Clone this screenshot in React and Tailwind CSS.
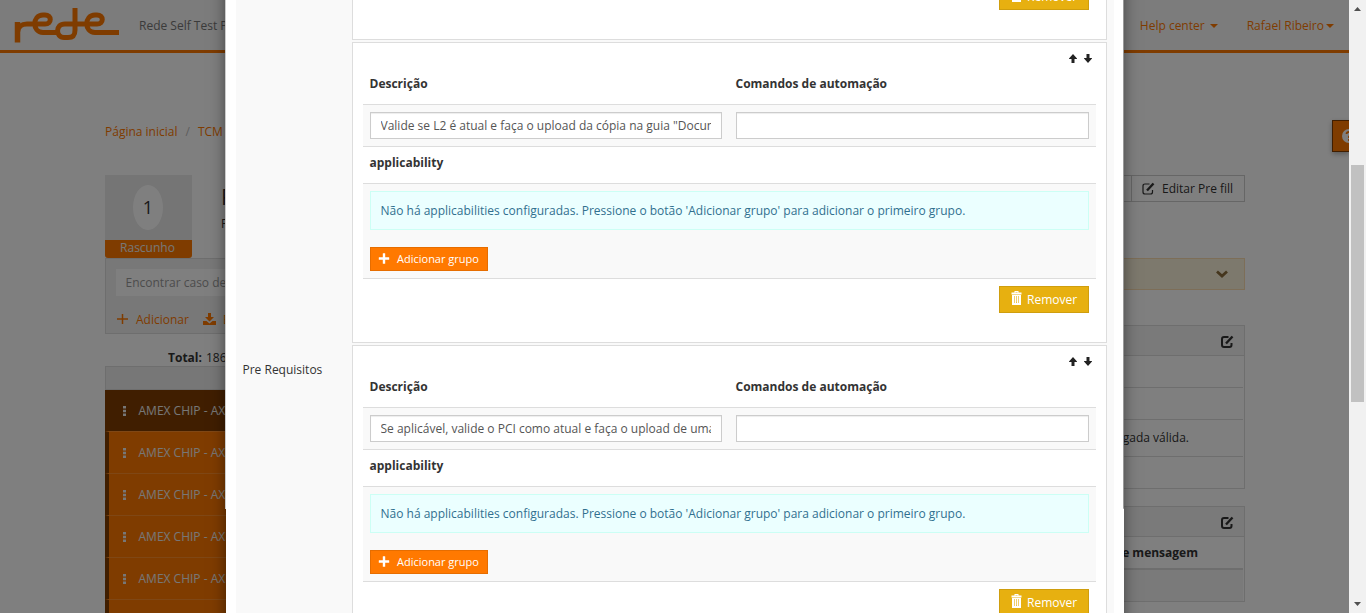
import React from "react";

const PLUS = "M11 13H6.4Q6 13 6 12.6V8H1.4Q1 8 1 7.6V5.4Q1 5 1.4 5H6V.4Q6 0 6.4 0h2.2Q9 0 9 .4V5h4.6q.4 0 .4.4v2.2q0 .4-.4.4H9v4.600q0 .4-.4.4z";

function Caret() {
  return (
    <svg width="8" height="4" viewBox="0 0 8 4" fill="currentColor"><path d="M0 0h8L4 4z" /></svg>
  );
}

function Logo() {
  return (
    <svg width="106" height="36" viewBox="0 0 106 36" fill="none" stroke="#ff7900" strokeWidth="5">
      <path d="M3.500 34.500V14" strokeWidth="5.500" />
      <path d="M3.500 24C4.500 18 7.500 16 13 16H31C38 16 38 7 31 7H29C18 7 18 24.500 29 24.500H43" />
      <path d="M61 0V22C61 27.500 59 29.500 54 29.500H50C41.500 29.500 41 16 51 16H83C90 16 90 7 83 7H81C70 7 70 24.500 81 24.500H105" />
    </svg>
  );
}

function EditIcon({ bold }) {
  return (
    <svg width="13" height="13" viewBox="0 0 13 13" fill="none" stroke="currentColor" strokeWidth={bold ? 2 : 1.2}>
      <path d="M7.500 2H3Q1 2 1 4v6q0 2 2 2h5.500q2 0 2-2V8" />
      <path d="M5 8.500 11.500 1.500" strokeWidth="2.400" />
    </svg>
  );
}

function Trash() {
  return (
    <svg width="11" height="14" viewBox="0 0 11 14" fill="#fff">
      <path fillRule="evenodd" d="M3.500 0h4v1.500H10.500v2H.5v-2h3zM4.500 1v.5h2V1zM1 4h9v10H1zM3 5v7h.6V5zm2.200 0v7h.6V5zM7.400 5v7H8V5z" />
    </svg>
  );
}

function RemoveButton() {
  return (
    <button className="flex h-[27px] w-[90px] shrink-0 items-start border border-[#cf9e0e] bg-[#e7b010] pl-[11px] pt-1 text-white">
      <Trash />
      <span className="ml-[5px] whitespace-nowrap text-[12px] leading-[18px]">Remover</span>
    </button>
  );
}

function Arrows() {
  return (
    <div className="flex justify-end gap-[7px] pr-[4px] pt-[11px] text-[#222]">
      <svg width="8" height="9" viewBox="0 0 8 9" fill="currentColor"><path d="M4 0 8 4.500V5H5.500V9h-3V5H0v-.5z" /></svg>
      <svg width="8" height="9" viewBox="0 0 8 9" fill="currentColor"><path d="M4 9 0 4.500V4h2.500V0h3v4H8v.5z" /></svg>
    </div>
  );
}

function Requirement({ value }) {
  return (
    <section className="mb-[2px] h-[301px] shrink-0 border border-[#ddd] bg-white pl-[10px] pr-[10px]">
      <div className="h-[31px]"><Arrows /></div>
      <div className="grid h-[30px] grid-cols-2 text-[12px] font-bold leading-[20px] text-[#333]">
        <div className="pl-[6.500px]">Descrição</div>
        <div className="pl-[6px]">Comandos de automação</div>
      </div>
      <div className="flex h-[43px] gap-[14px] border-y border-[#ddd] bg-[#f9f9f9] px-[7px] pt-[7px]">
        <div className="h-[27px] w-[352px] shrink-0 border border-[#ccc] bg-white pl-[9.500px] pr-[10px] shadow-[inset_0_1px_1px_rgba(0,0,0,0.075)]">
          <div className="overflow-hidden whitespace-nowrap text-[12px] leading-[25px] text-[#555]">{value}</div>
        </div>
        <div className="h-[27px] w-[353px] shrink-0 border border-[#ccc] bg-white shadow-[inset_0_1px_1px_rgba(0,0,0,0.075)]" />
      </div>
      <div className="h-[36px] pl-[6.500px] pt-[6px] text-[12px] font-bold leading-[20px] text-[#333]">applicability</div>
      <div className="h-[96px] border-y border-[#ddd] bg-[#f9f9f9] px-[7px] pt-[7px]">
        <div className="h-[39px] border border-[#ccfff5] bg-[#ebffff] pl-[9.500px] text-[12px] leading-[38px] text-[#31708f]">
          Não há applicabilities configuradas. Pressione o botão 'Adicionar grupo' para adicionar o primeiro grupo.
        </div>
        <button className="mt-[17px] flex h-[24px] w-[118px] items-center border border-[#e66d00] bg-[#ff7900] pl-[7px] text-[11px] text-white">
          <svg className="mb-[2px]" width="12" height="11" viewBox="0 0 15 13" fill="currentColor"><path d={PLUS} /></svg>
          <span className="ml-[7px] whitespace-nowrap">Adicionar grupo</span>
        </button>
      </div>
      <div className="flex justify-end pr-[7px] pt-[7px]"><RemoveButton /></div>
    </section>
  );
}

function Header() {
  return (
    <header className="flex h-[53px] shrink-0 items-start border-b-[3px] border-[#ff7900] bg-[#f8f8f8] pl-[14px] text-[12px]">
      <div className="mt-[8px] w-[125px]"><Logo /></div>
      <span className="mt-[16px] whitespace-nowrap leading-[20px] text-[#777]">Rede Self Test Portal</span>
      <div className="ml-auto mr-[15px] mt-[16px] flex text-[12px] leading-[20px] text-[#ff7900]">
        <span className="flex items-center gap-[5px]">Help center <Caret /></span>
        <span className="ml-[29px] flex items-center gap-[2px]">Rafael Ribeiro <Caret /></span>
      </div>
    </header>
  );
}

function LeftColumn() {
  return (
    <div className="w-[300px] shrink-0">
      <div className="flex">
        <div className="h-[83px] w-[87px] overflow-hidden rounded-b-[3px] bg-[#eaeaea]">
          <div className="flex h-[65px] justify-center pr-px pt-[10px]">
            <div className="flex h-[45px] w-[30px] items-center justify-center rounded-[50%] bg-white text-[18px] text-[#333]">1</div>
          </div>
          <div className="h-[18px] bg-[#ff7900] pr-[2px] text-center text-[12px] leading-[16px] text-[#eee]">Rascunho</div>
        </div>
        <div className="ml-[29px] text-[#333]">
          <div className="pt-[6px] text-[22px] leading-[30px]">Rede</div>
          <div className="pt-[3px] text-[12px] leading-[20px]">Por</div>
        </div>
      </div>
      <div className="h-[76px] border border-[#ddd] bg-[#f0f0f0] pl-[10px] pt-[10px]">
        <div className="h-[27px] bg-white pl-[9.500px] text-[12px] leading-[28px] text-[#999]">Encontrar caso de teste</div>
        <div className="mt-[14px] flex items-center whitespace-nowrap text-[12px] leading-[20px] text-[#ff7900]">
          <svg className="mb-[2px] ml-px" width="11" height="10" viewBox="0 0 11 10" stroke="currentColor" strokeWidth="1.500"><path d="M5.500 0v10M0 5h11" /></svg>
          <span className="ml-[8px]">Adicionar</span>
          <svg className="mb-[3px] ml-[14px]" width="13" height="12" viewBox="0 0 13 12" fill="currentColor"><path d="M5 0h3v4h3L6.500 8.500 2 4h3zM0 8h3.500L6.500 10.500 9.500 8H13v4H0z" /></svg>
          <span className="ml-[7px]">Exportar</span>
        </div>
      </div>
      <div className="flex h-[32px] gap-1 pl-[63px] pt-[14px] text-[12px] leading-[20px] text-[#333]"><b>Total:</b> 186</div>
      <div className="h-[24px] border border-[#ddd] bg-[#eee]" />
      {["a", "b", "c", "d", "e", "f"].map((id, index) => (
        <div key={id} className={index === 0
          ? "flex h-[41px] items-center bg-[#803d00] pl-[18px] text-[12px] text-[#eee]"
          : "flex h-[42px] items-center border-l-4 border-t border-l-[#803d00] border-t-[#ff8f2a] bg-[#ff7900] pl-[14px] text-[12px] text-[#eee]"}>
          <svg width="3" height="10" viewBox="0 0 3 10" fill="currentColor"><path d="M0 0h3v2.500H0zM0 3.750h3v2.500H0zM0 7.500h3V10H0z" /></svg>
          <span className="ml-[12.500px] whitespace-nowrap">{index < 5 ? "AMEX CHIP - AXP 001" : ""}</span>
        </div>
      ))}
    </div>
  );
}

function RightColumn() {
  return (
    <div className="ml-auto w-[200px] text-[12px] text-[#333]">
      <div className="flex h-[27px]">
        <div className="h-[27px] grow border border-r-0 border-[#ccc]" />
        <div className="flex h-[27px] w-[114px] items-center border border-[#ccc] pl-[10px]">
          <EditIcon /><span className="ml-[7px] whitespace-nowrap">Editar Pre fill</span>
        </div>
      </div>
      <div className="mt-[56px] flex h-[32px] items-center justify-end border border-[#faddb0] bg-[#fbf2da] pr-[16px] text-[#8a6d3b]">
        <svg width="12" height="8" viewBox="0 0 12 8" fill="none" stroke="currentColor" strokeWidth="2.800"><path d="m1 1.500 5 4.500 5-4.500" /></svg>
      </div>
      <div className="mt-[35px] h-[164px] border border-[#ddd]">
        <div className="flex h-[30px] items-center justify-end border-b border-[#ddd] bg-[#f5f5f5] pr-[10px] pt-px"><EditIcon bold /></div>
        <div className="mr-px h-[32px] border-b border-[#ddd]" />
        <div className="mr-px h-[32px] border-b border-[#ddd]" />
        <div className="mr-px h-[37px] border-b border-[#ddd] pr-[54px] text-right leading-[36px]">gada válida.</div>
      </div>
      <div className="mt-[17px] h-[96px] border border-[#ddd]">
        <div className="flex h-[30px] items-center justify-end border-b border-[#ddd] bg-[#f5f5f5] pr-[10px] pt-px"><EditIcon bold /></div>
        <div className="mr-px h-[33px] border-b-2 border-[#ddd] pr-[45px] text-right font-bold leading-[32px]">de mensagem</div>
        <div className="mr-px h-[31px] bg-[#f5f5f5]" />
      </div>
    </div>
  );
}

function Modal() {
  return (
    <div className="absolute left-[225px] top-0 h-[613px] w-[899px]">
      <div className="absolute inset-x-px -top-10 h-[700px] shadow-[0_5px_15px_rgba(0,0,0,0.5)]" />
      <div className="absolute inset-x-0 -top-10 h-[549px] border border-[#ccc] border-r-[#999] bg-white" />
      <div className="relative ml-px flex h-[613px] overflow-hidden bg-white bg-clip-padding pl-[10px] [clip-path:polygon(0_0,897px_0,897px_509px,898px_509px,898px_613px,0_613px)]">
        <div className="flex w-[878px] bg-[#f9f9f9]">
          <div className="w-[116px] shrink-0 pl-[6.500px] pt-[360px] text-[12px] leading-[20px] text-[#333]">Pre Requisitos</div>
          <div className="flex w-[755px] shrink-0 flex-col">
            <section className="mb-[2px] flex h-[40px] shrink-0 items-start justify-end overflow-hidden border border-t-0 border-[#ddd] bg-white pr-[17px]">
              <div className="-mt-[17px]"><RemoveButton /></div>
            </section>
            <Requirement value={'Valide se L2 é atual e faça o upload da cópia na guia "Documentos"'} />
            <Requirement value="Se aplicável, valide o PCI como atual e faça o upload de uma cópia" />
          </div>
        </div>
      </div>
    </div>
  );
}

export default function App() {
  return (
    <div className="flex h-[613px] w-[1366px] overflow-hidden bg-white font-['Open_Sans',sans-serif]">
      <main className="relative h-[613px] w-[1349px] shrink-0 overflow-hidden">
        <div className="flex h-[613px] flex-col overflow-hidden">
          <Header />
          <div className="w-[1245px] pl-[105px]">
            <nav className="flex h-[122px] gap-[8px] pt-[69px] text-[12px] leading-[20px] text-[#ff7900]">
              <span>Página inicial</span><span className="text-[#bbb]">/</span><span>TCM</span>
            </nav>
            <div className="flex"><LeftColumn /><RightColumn /></div>
          </div>
        </div>
        <div className="absolute right-0 top-[120px] flex h-[32px] w-[17px] items-center overflow-hidden border border-r-0 border-[#803d00] bg-[#ff7900] pl-[9px] shadow-[0_2px_5px_rgba(0,0,0,0.3)]">
          <svg className="shrink-0" width="14" height="14" viewBox="0 0 14 14"><circle cx="7" cy="7" r="7" fill="#fff" /><path d="M4.500 5q0-2 2.500-2t2.500 2Q9.500 6.500 7 7.500V9M7 10v2" fill="none" stroke="#ff7900" strokeWidth="1.800" /></svg>
        </div>
        <div className="absolute inset-0 bg-black/50" />
        <Modal />
      </main>
      <aside className="flex h-[613px] w-[17px] shrink-0 flex-col items-center justify-between bg-[#f1f1f1] py-[7px] text-[#505050]">
        <svg width="7" height="4" viewBox="0 0 7 4" fill="currentColor"><path d="M3.500 0 7 4H0z" /></svg>
        <div className="mb-[47px] h-[237px] w-[13px] bg-[#c1c1c1]" />
        <svg width="7" height="4" viewBox="0 0 7 4" fill="currentColor"><path d="M0 0h7L3.500 4z" /></svg>
      </aside>
    </div>
  );
}
